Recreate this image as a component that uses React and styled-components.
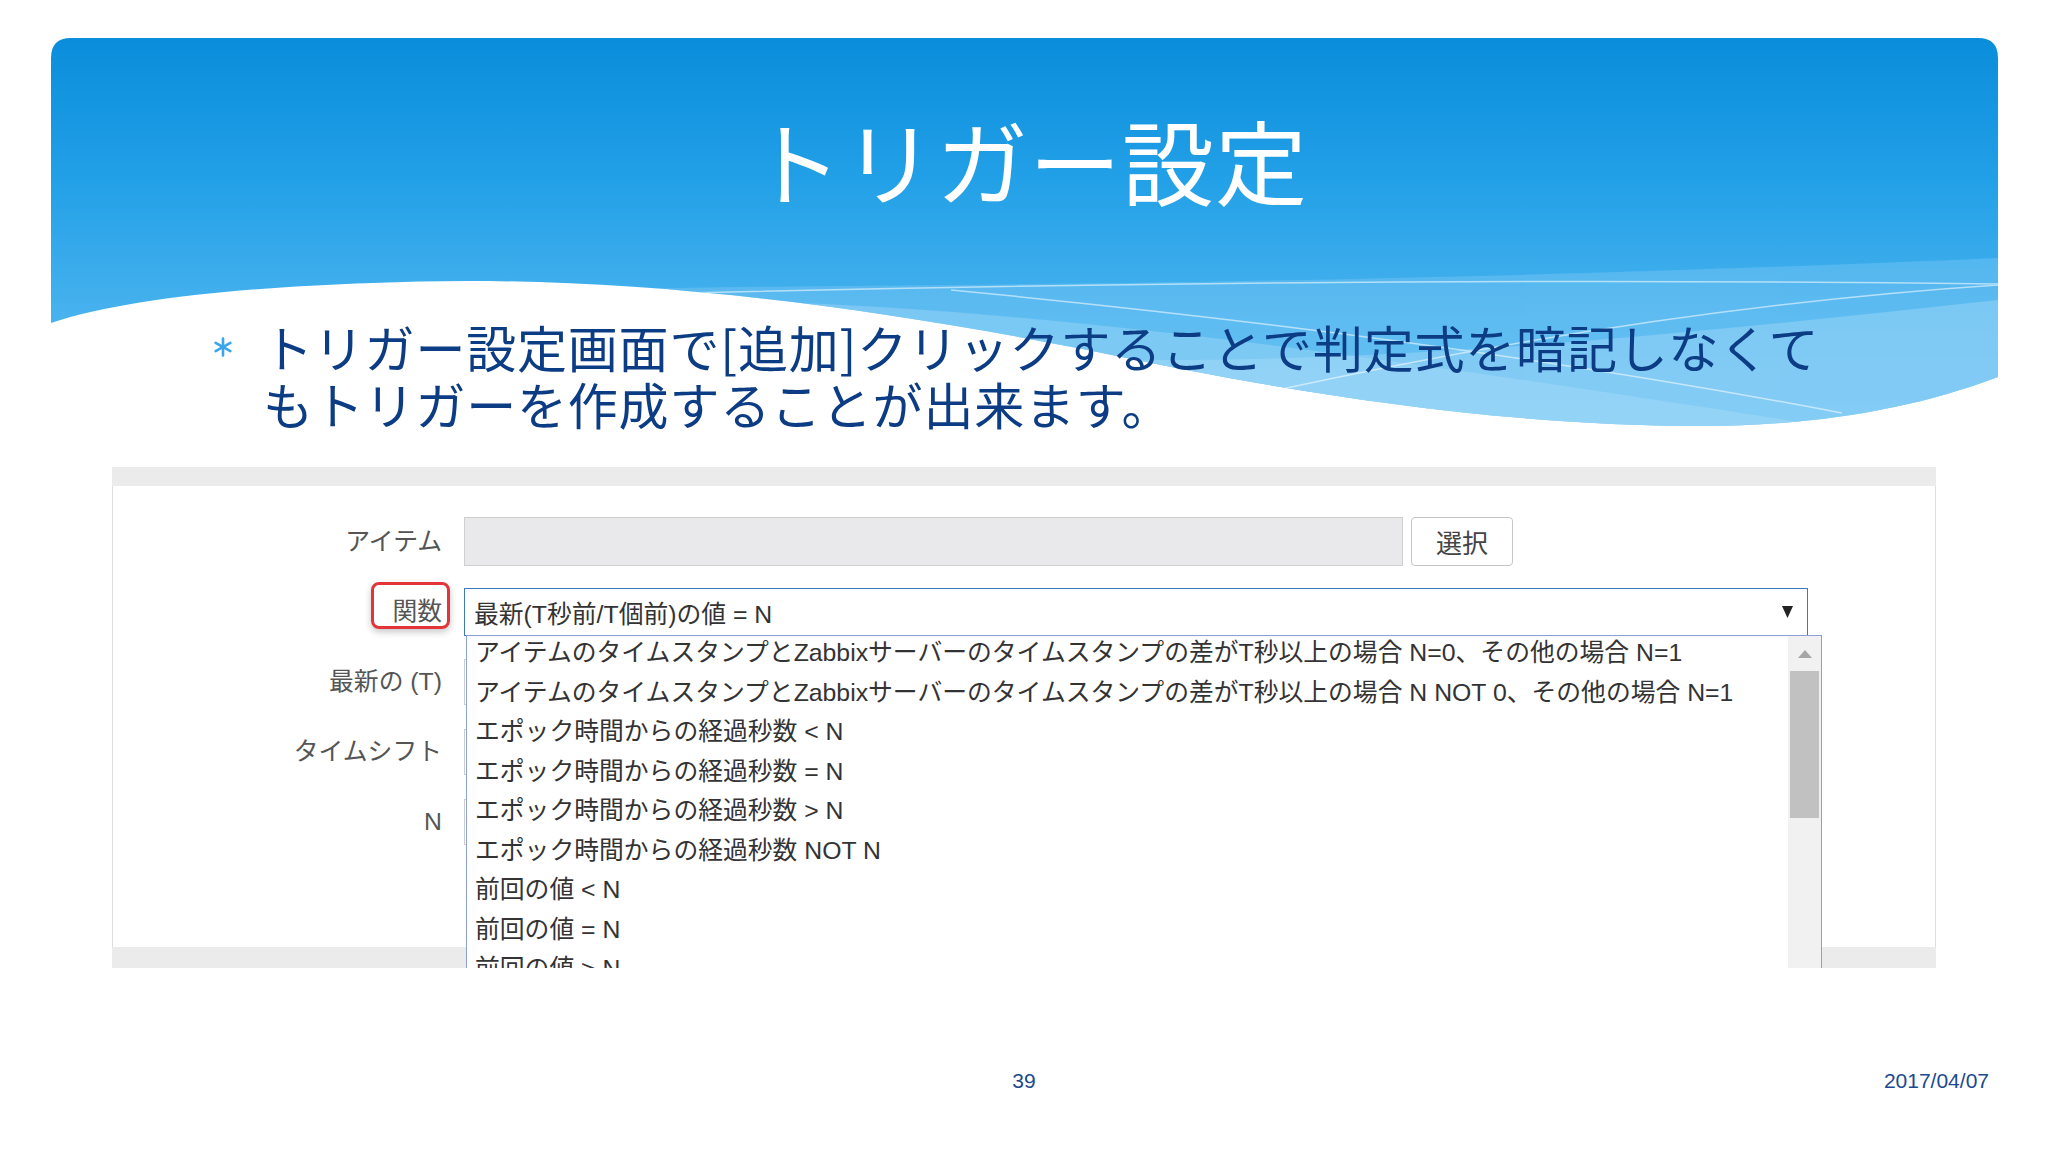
import styled, { createGlobalStyle } from "styled-components";

const GlobalStyle = createGlobalStyle`
  html, body {
    margin: 0;
    padding: 0;
    background: #fff;
  }
  body {
    font-family: "Noto Sans CJK JP", sans-serif;
  }
`;

const Slide = styled.div`
  position: relative;
  width: 2048px;
  height: 1152px;
  overflow: hidden;
  background: #fff;
`;

// slide header art (gradient + waves), sits behind the text
const Backdrop = styled.svg`
  position: absolute;
  left: 51px;
  top: 38px;
  width: 1947px;
  height: 400px;
`;

const Content = styled.div`
  position: relative;
  display: flex;
  flex-direction: column;
  height: 100%;
`;

const Title = styled.h1`
  margin: 105px 0 0;
  padding-left: 10px;
  font: 400 92px/108px "Noto Sans CJK JP", sans-serif;
  letter-spacing: 1px;
  color: #fff;
  text-align: center;
`;

const Bullet = styled.div`
  display: flex;
  margin-top: 105px;
  padding-left: 213px;
`;

const Marker = styled.div`
  display: flex;
  align-items: center;
  width: 50px;
  height: 57px;
  flex: none;
`;

const BulletText = styled.p`
  margin: 0;
  font: 400 50px/57px "Noto Sans CJK JP", sans-serif;
  letter-spacing: 0.8px;
  color: #0c3c84;
  white-space: nowrap;
`;

const Shot = styled.div`
  display: flex;
  flex-direction: column;
  margin: 35px 0 0 112px;
  width: 1824px;
  height: 501px;
  overflow: hidden;
`;

const Band = styled.div`
  height: ${(p) => p.h}px;
  flex: none;
  background: #ebebeb;
`;

const Body = styled.div`
  position: relative;
  flex: 1;
  display: flex;
  flex-direction: column;
  gap: 22px;
  padding-top: 31px;
  background: #fff;
  border-left: 1px solid #dedede;
  border-right: 1px solid #dedede;
  font-family: "Liberation Sans", "Noto Sans CJK JP", sans-serif;
  font-size: 24.8px;
  color: #333;
`;

const Row = styled.div`
  display: flex;
  align-items: center;
  gap: 22px;
  height: ${(p) => p.h || 48}px;
`;

const Label = styled.div`
  position: relative;
  width: 329px;
  flex: none;
  text-align: right;
  color: #555;
  line-height: 30px;
`;

// red annotation drawn around the label in the screenshot
const Highlight = styled.span`
  position: absolute;
  right: -8px;
  top: -15px;
  width: 79px;
  height: 47px;
  box-sizing: border-box;
  border: 3px solid #e3343a;
  border-radius: 8px;
  box-shadow: 0 3px 7px rgba(0, 0, 0, 0.22);
`;

const ItemField = styled.div`
  width: 939px;
  height: 49px;
  box-sizing: border-box;
  background: #e9e9eb;
  border: 1px solid #cfcfcf;
`;

const SelectButton = styled.button`
  width: 102px;
  height: 49px;
  margin-left: -14px;
  padding: 0;
  background: #fff;
  border: 1px solid #c6c6c6;
  border-radius: 4px;
  font: 400 26px "Noto Sans CJK JP", sans-serif;
  color: #444;
`;

const Select = styled.div`
  position: relative;
  display: flex;
  align-items: center;
  justify-content: space-between;
  width: 1344px;
  height: 48px;
  box-sizing: border-box;
  padding: 0 14px 0 9px;
  border: 1px solid #3d7cbc;
  white-space: nowrap;
`;

const PlainField = styled.div`
  width: 400px;
  height: 46px;
  box-sizing: border-box;
  border: 1px solid #cccccc;
`;

const Dropdown = styled.div`
  position: absolute;
  left: 1px;
  top: 46px;
  width: 1356px;
  height: 420px;
  display: flex;
  box-sizing: border-box;
  background: #fff;
  border: 1px solid #8c9fd8;
`;

const Options = styled.ul`
  flex: 1;
  margin: -3px 0 0;
  padding: 0 0 0 8px;
  list-style: none;
`;

const Option = styled.li`
  line-height: 39.5px;
  white-space: nowrap;
  color: #333;
`;

const Scrollbar = styled.div`
  width: 33px;
  flex: none;
  display: flex;
  flex-direction: column;
  align-items: center;
  background: #f1f1f1;
`;

const ScrollArrow = styled.svg`
  margin-top: 14px;
  width: 14px;
  height: 8px;
`;

const Thumb = styled.div`
  margin-top: 13px;
  width: 29px;
  height: 147px;
  background: #c1c1c1;
`;

const Footer = styled.div`
  display: grid;
  grid-template-columns: 1fr auto 1fr;
  margin-top: 98px;
  padding: 0 59px;
  font: 400 21px/30px "Liberation Sans", Arial, sans-serif;
  color: #1b4a90;
`;

const PageNo = styled.div`
  grid-column: 2;
`;

const DateText = styled.div`
  text-align: right;
`;

const options = [
  "アイテムのタイムスタンプとZabbixサーバーのタイムスタンプの差がT秒以上の場合 N=0、その他の場合 N=1",
  "アイテムのタイムスタンプとZabbixサーバーのタイムスタンプの差がT秒以上の場合 N NOT 0、その他の場合 N=1",
  "エポック時間からの経過秒数 < N",
  "エポック時間からの経過秒数 = N",
  "エポック時間からの経過秒数 > N",
  "エポック時間からの経過秒数 NOT N",
  "前回の値 < N",
  "前回の値 = N",
  "前回の値 > N",
];

const HeaderArt = () => (
  <Backdrop viewBox="0 0 1947 400" preserveAspectRatio="none">
    <defs>
      <linearGradient id="sky" x1="0" y1="0" x2="0" y2="1">
        <stop offset="0" stopColor="#0a8ddb" />
        <stop offset="0.35" stopColor="#22a0e7" />
        <stop offset="0.7" stopColor="#48b2ee" />
        <stop offset="1" stopColor="#5fbef2" />
      </linearGradient>
      <clipPath id="panel">
        <path d="M0,20 Q0,0 20,0 H1927 Q1947,0 1947,20 V339 C1860,372 1760,388 1650,388 C1450,388 1250,355 1100,325 C800,262 550,235 321,245 C180,250 70,262 0,285 Z" />
      </clipPath>
    </defs>
    <g clipPath="url(#panel)">
      <rect x="0" y="0" width="1947" height="400" fill="url(#sky)" />
      <path d="M540,252 C800,244 1200,252 1947,220 L1947,400 L540,400 Z" fill="#7fcbf5" opacity="0.4" />
      <path d="M980,320 C1300,330 1600,300 1947,262 L1947,400 L980,400 Z" fill="#a3daf8" opacity="0.45" />
      <path d="M640,262 C1000,266 1400,330 1800,392 L640,400 Z" fill="#b2e0f9" opacity="0.35" />
      <g fill="none" stroke="#fff" strokeWidth="1.5" opacity="0.55">
        <path d="M600,256 Q1300,238 1947,246" />
        <path d="M900,252 Q1400,300 1791,375" />
        <path d="M1217,354 Q1600,270 1947,247" />
      </g>
    </g>
  </Backdrop>
);

const Asterisk = () => (
  <svg width="20" height="20" viewBox="0 0 20 20">
    <g stroke="#3aa5ec" strokeWidth="2.6" strokeLinecap="round">
      <line x1="10" y1="1.5" x2="10" y2="18.5" />
      <line x1="2.6" y1="5.8" x2="17.4" y2="14.2" />
      <line x1="2.6" y1="14.2" x2="17.4" y2="5.8" />
    </g>
  </svg>
);

const App = () => {
  return (
    <>
      <GlobalStyle />
      <Slide>
        <HeaderArt />
        <Content>
          <Title>トリガー設定</Title>

          <Bullet>
            <Marker>
              <Asterisk />
            </Marker>
            <BulletText>
              トリガー設定画面で[追加]クリックすることで判定式を暗記しなくて
              <br />
              もトリガーを作成することが出来ます。
            </BulletText>
          </Bullet>

          <Shot>
            <Band h={19} />
            <Body>
              <Row h={49}>
                <Label>アイテム</Label>
                <ItemField />
                <SelectButton>選択</SelectButton>
              </Row>
              <Row>
                <Label>
                  関数
                  <Highlight />
                </Label>
                <Select>
                  <span>最新(T秒前/T個前)の値 = N</span>
                  <svg width="11" height="12" viewBox="0 0 11 12">
                    <polygon points="0,0 11,0 5.5,12" fill="#222" />
                  </svg>
                  <Dropdown>
                    <Options>
                      {options.map((o) => (
                        <Option key={o}>{o}</Option>
                      ))}
                    </Options>
                    <Scrollbar>
                      <ScrollArrow viewBox="0 0 14 8">
                        <polygon points="0,8 14,8 7,0" fill="#a6a6a6" />
                      </ScrollArrow>
                      <Thumb />
                    </Scrollbar>
                  </Dropdown>
                </Select>
              </Row>
              <Row>
                <Label>最新の (T)</Label>
                <PlainField />
              </Row>
              <Row>
                <Label>タイムシフト</Label>
                <PlainField />
              </Row>
              <Row>
                <Label>N</Label>
                <PlainField />
              </Row>
            </Body>
            <Band h={21} />
          </Shot>

          <Footer>
            <PageNo>39</PageNo>
            <DateText>2017/04/07</DateText>
          </Footer>
        </Content>
      </Slide>
    </>
  );
};

export default App;
